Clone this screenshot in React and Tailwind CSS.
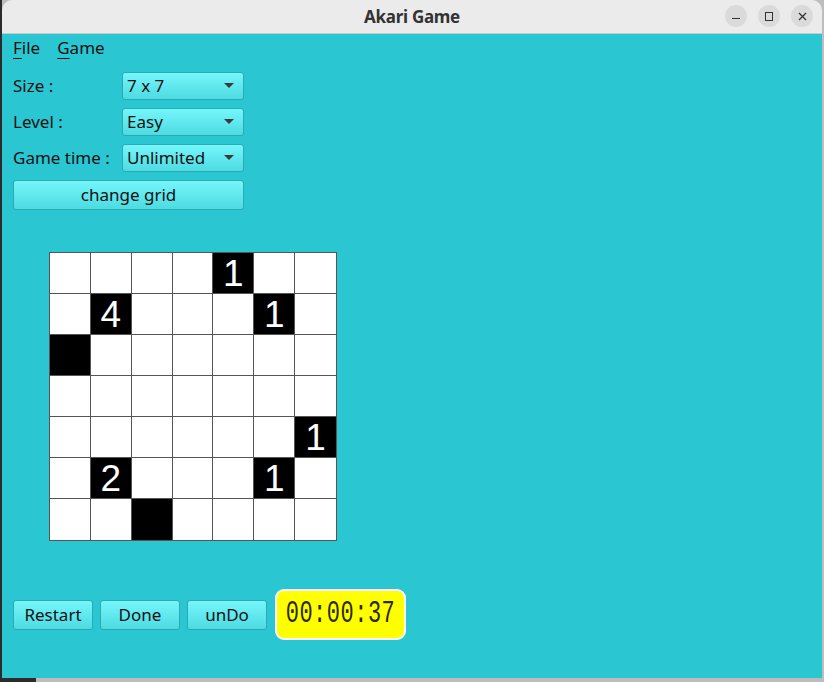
import React from "react";

const grid = [
  [0, 0, 0, 0, "1", 0, 0],
  [0, "4", 0, 0, 0, "1", 0],
  ["b", 0, 0, 0, 0, 0, 0],
  [0, 0, 0, 0, 0, 0, 0],
  [0, 0, 0, 0, 0, 0, "1"],
  [0, "2", 0, 0, 0, "1", 0],
  [0, 0, "b", 0, 0, 0, 0],
];

function Combo({ value }) {
  return (
    <div className="w-[122px] h-[28px] rounded-[3px] border border-[#2ea9b0] bg-gradient-to-b from-[#74f6fa] to-[#4cdbe2] flex items-center justify-between pl-[4px] pr-[9px] text-[17px] text-[#111]">
      <span>{value}</span>
      <svg width="10" height="6" viewBox="0 0 10 6">
        <path d="M0 0 L10 0 L5 5 Z" fill="#3a3a3a" />
      </svg>
    </div>
  );
}

function Btn({ children, className }) {
  return (
    <div
      className={
        "h-[30px] rounded-[3px] border border-[#2ea9b0] bg-gradient-to-b from-[#74f6fa] to-[#4cdbe2] flex items-center justify-center text-[17px] text-[#111] " +
        (className || "")
      }
    >
      {children}
    </div>
  );
}

export default function App() {
  return (
    <div
      className="w-[824px] h-[682px] bg-[#bdbdbd] relative overflow-hidden"
      style={{ fontFamily: '"Noto Sans", "Open Sans", sans-serif' }}
    >
      <div className="absolute left-0 top-0 w-[2px] h-[682px] bg-[#2b2b2b]" />
      <div className="absolute left-0 bottom-0 w-[36px] h-[4px] bg-[#2b2b2b]" />
      <div className="ml-[2px] w-[820px] h-[678px] flex flex-col rounded-t-[10px] overflow-hidden">
        {/* title bar */}
        <div className="h-[34px] bg-[#ebebeb] border-b border-[#c9c9c9] flex items-center relative shrink-0">
          <div className="flex-1 text-center text-[17px] font-bold text-[#333] tracking-[-0.3px]">
            Akari Game
          </div>
          <div className="absolute right-[9px] top-[5px] flex gap-[11px]">
            <div className="w-[22px] h-[22px] rounded-full bg-[#dadada] flex items-center justify-center">
              <div className="w-[8px] h-[1px] bg-[#333] mt-[5px]" />
            </div>
            <div className="w-[22px] h-[22px] rounded-full bg-[#dadada] flex items-center justify-center">
              <div className="w-[8px] h-[9px] border border-[#333]" />
            </div>
            <div className="w-[22px] h-[22px] rounded-full bg-[#dadada] flex items-center justify-center">
              <svg width="9" height="9" viewBox="0 0 9 9">
                <path d="M1 1 L8 8 M8 1 L1 8" stroke="#333" strokeWidth="1.3" />
              </svg>
            </div>
          </div>
        </div>
        {/* body */}
        <div className="flex-1 bg-[#2ac7d2] flex flex-col pl-[10px]">
          {/* menu */}
          <div className="flex gap-[17px] h-[27px] items-center text-[17px] text-[#111]">
            <span className="ml-[1px]">
              <span className="underline underline-offset-[4px]">F</span>ile
            </span>
            <span>
              <span className="underline underline-offset-[4px]">G</span>ame
            </span>
          </div>
          <div className="flex flex-col gap-[8px] mt-[11px] w-[231px] ml-[1px]">
            <div className="flex items-center justify-between text-[17px] text-[#111]">
              <span>Size :</span>
              <Combo value="7 x 7" />
            </div>
            <div className="flex items-center justify-between text-[17px] text-[#111]">
              <span>Level :</span>
              <Combo value="Easy" />
            </div>
            <div className="flex items-center justify-between text-[17px] text-[#111]">
              <span>Game time :</span>
              <Combo value="Unlimited" />
            </div>
            <Btn className="h-[30px]">change grid</Btn>
          </div>
          {/* grid */}
          <div className="mt-[42px] ml-[37px] w-[288px] border border-[#555] bg-white grid grid-cols-7">
            {grid.flat().map((c, i) => {
              const r = Math.floor(i / 7);
              const col = i % 7;
              const black = c !== 0;
              return (
                <div
                  key={i}
                  className={
                    "h-[41px] flex items-center justify-center text-white text-[37px] leading-none " +
                    (black ? "bg-black " : "bg-white ") +
                    (col < 6 ? "border-r border-[#555] " : "") +
                    (r < 6 ? "border-b border-[#555]" : "")
                  }
                  style={{ fontFamily: '"Liberation Sans", Arial, sans-serif' }}
                >
                  {c !== 0 && c !== "b" ? c : ""}
                </div>
              );
            })}
          </div>
          {/* bottom */}
          <div className="flex items-center mt-[48px] ml-[1px]">
            <Btn className="w-[80px]">Restart</Btn>
            <Btn className="w-[80px] ml-[7px]">Done</Btn>
            <Btn className="w-[80px] ml-[7px]">unDo</Btn>
            <div className="ml-[8px] w-[131px] h-[51px] rounded-[9px] border-2 border-white bg-[#ffff00] flex items-center justify-center">
              <span
                className="text-[22px] leading-none text-[#2a2a00] scale-y-[1.45] tracking-[0.5px]"
                style={{ fontFamily: '"Liberation Mono", monospace' }}
              >
                00:00:37
              </span>
            </div>
          </div>
        </div>
      </div>
    </div>
  );
}
